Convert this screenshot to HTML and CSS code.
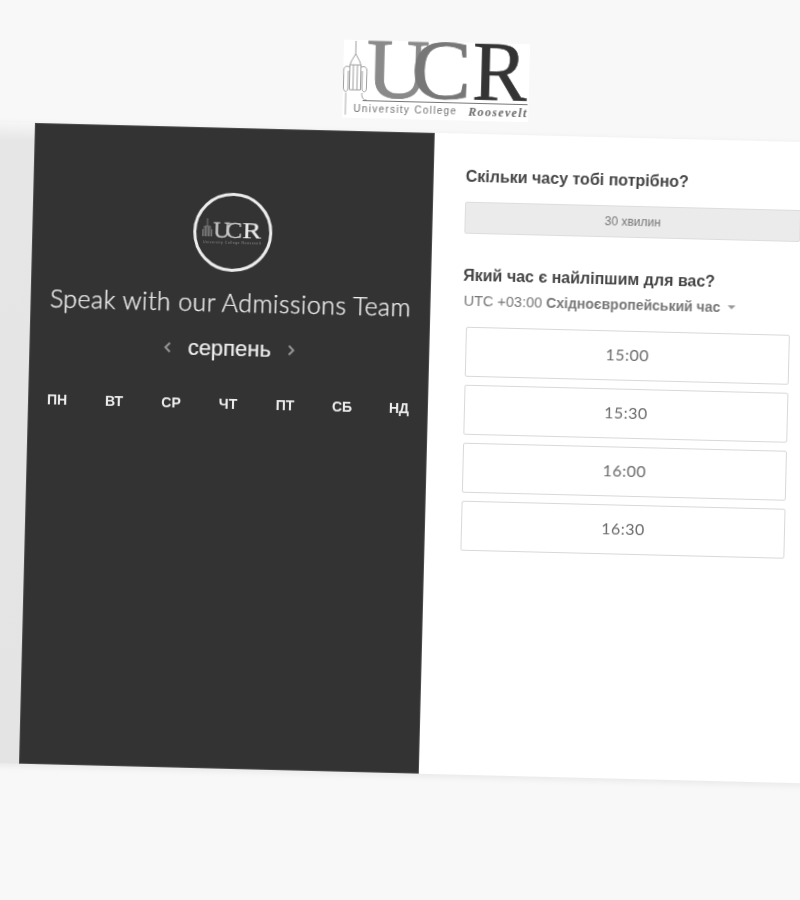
FILE: index.html
```html
<!DOCTYPE html>
<html lang="uk">
<head>
<meta charset="utf-8">
<title>Speak with our Admissions Team</title>
<link rel="stylesheet" href="styles.css">
</head>
<body>
<div class="page">
  <div class="stage">
    <header class="brand">
      <svg class="brand-logo" viewBox="0 0 186 78" width="186" height="78" role="img" aria-label="UCR University College Roosevelt">
        <rect width="186" height="78" fill="#fff"/>
        <g fill="none" stroke="#a0a0a0" stroke-width="1">
          <path d="M12 1V14M12 14L8 21L6.500 25V50M12 14L16 21L17.500 25V50M6.500 25H17.500M10 25V50M14 25V50"/>
          <path d="M6 27C0 25 0 30 0.500 36V48C0.500 53 5 53 5 48V31M18 27C24 25 24 30 23.500 36V48C23.500 53 19 53 19 48V31M6.500 50H17.500"/>
          <path d="M3 53V75" stroke="#aaa"/>
          <path d="M19 53C19 57 20 60 24 60"/>
        </g>
        <path d="M20 60.500H185" stroke="#777" stroke-width="1"/>
        <text class="logo-u" x="23" y="57" textLength="63" lengthAdjust="spacingAndGlyphs">U</text>
        <text class="logo-c" x="68" y="57" textLength="60" lengthAdjust="spacingAndGlyphs">C</text>
        <text class="logo-r" x="129" y="57" textLength="55" lengthAdjust="spacingAndGlyphs">R</text>
        <text class="logo-sub" x="11" y="72">University College</text>
        <text class="logo-sub-em" x="126" y="73" textLength="58">Roosevelt</text>
      </svg>
    </header>
    <main class="card-row">
      <div class="edge"></div>
      <section class="panel-dark">
        <div class="avatar">
          <svg class="avatar-logo" viewBox="0 0 62 29" width="62" height="29" role="img" aria-label="UCR">
            <g fill="none" stroke="#7c7c7c" stroke-width="1"><path d="M6 1V19M3 9H9M3 9V19M9 9V19M4.500 9V19M7.500 9V19M1.500 12V19M10.500 12V19"/></g>
            <text class="mini-uc" x="12" y="20" textLength="17" lengthAdjust="spacingAndGlyphs">U</text>
            <text class="mini-uc" x="24" y="20" textLength="17" lengthAdjust="spacingAndGlyphs">C</text>
            <text class="mini-r" x="41" y="20" textLength="19" lengthAdjust="spacingAndGlyphs">R</text>
            <text class="mini-sub" x="2" y="25.500" textLength="58">University College Roosevelt</text>
          </svg>
        </div>
        <h1 class="team-title">Speak with our Admissions Team</h1>
        <div class="month-nav">
          <svg class="chev" viewBox="0 0 8 12" width="8" height="12"><path d="M6.500 1.500L2 6L6.500 10.500" fill="none" stroke="#9a9a9a" stroke-width="1.800"/></svg>
          <span class="month">серпень</span>
          <svg class="chev" viewBox="0 0 8 12" width="8" height="12"><path d="M1.500 1.500L6 6L1.500 10.500" fill="none" stroke="#9a9a9a" stroke-width="1.800"/></svg>
        </div>
        <div class="weekdays">
          <span>ПН</span><span>ВТ</span><span>СР</span><span>ЧТ</span><span>ПТ</span><span>СБ</span><span>НД</span>
        </div>
      </section>
      <section class="panel-light">
        <h2 class="question">Скільки часу тобі потрібно?</h2>
        <div class="duration">30 хвилин</div>
        <h2 class="question question-time">Який час є найліпшим для вас?</h2>
        <div class="timezone">UTC +03:00 <b>Східноєвропейський час</b><i class="caret"></i></div>
        <div class="slots">
          <button class="slot">15:00</button>
          <button class="slot">15:30</button>
          <button class="slot">16:00</button>
          <button class="slot">16:30</button>
        </div>
      </section>
    </main>
  </div>
</div>
</body>
</html>
```
FILE: styles.css
```css
* { box-sizing: border-box; }
html, body { margin: 0; padding: 0; height: 100%; }
body { background: #f8f8f8; font-family: "Liberation Sans", Arial, sans-serif; overflow: hidden; }
.page { width: 800px; height: 900px; overflow: hidden; }
.stage {
  width: 876px;
  padding-top: 31px;
  transform-origin: 0 0;
  transform: rotate(1.43deg);
  filter: blur(0.4px);
}
.brand { display: flex; justify-content: center; height: 91px; }
.brand-logo { display: block; overflow: visible; }
.logo-u { font: 85px "Liberation Serif", serif; fill: #8a8a8a; stroke: #8a8a8a; stroke-width: 0.8px; }
.logo-c { font: 85px "Liberation Serif", serif; fill: #777; stroke: #777; stroke-width: 0.8px; }
.logo-r { font: 85px "Liberation Serif", serif; fill: #343434; stroke: #343434; stroke-width: 0.5px; }
.logo-sub { font: 10px "Liberation Sans", sans-serif; letter-spacing: 1.3px; fill: #707070; }
.logo-sub-em { font: italic bold 12px "Liberation Serif", serif; fill: #666; }

.card-row { display: flex; height: 641px; box-shadow: 0 2px 7px rgba(0, 0, 0, 0.07); }
.edge { width: 38px; flex: none; background: linear-gradient(180deg, #f6f6f6, #e6e6e6 18px, #e4e4e4); }
.panel-dark {
  width: 400px; flex: none; background: #333; color: #f2f2f2; border: 1px solid #4c4c4c;
  display: flex; flex-direction: column; align-items: center;
  padding-top: 64px;
}
.avatar {
  width: 79px; height: 79px; border-radius: 50%; border: 3px solid #ececec;
  display: flex; align-items: center; justify-content: center;
}
.avatar-logo { overflow: visible; }
.mini-uc { font: 24px "Liberation Serif", serif; fill: #c8c8c8; stroke: #c8c8c8; stroke-width: 0.3px; }
.mini-r { font: 24px "Liberation Serif", serif; fill: #ececec; stroke: #ececec; stroke-width: 0.2px; }
.mini-sub { font: 3.500px "Liberation Sans", sans-serif; fill: #8c8c8c; }
.team-title {
  margin: 13px 0 0; font: 300 25px/34px Lato, sans-serif; color: #f4f4f4; letter-spacing: 0.4px; white-space: nowrap; -webkit-text-stroke: 0.25px #f4f4f4;
}
.month-nav { display: flex; align-items: center; margin-top: 14px; gap: 16px; height: 32px; }
.month { font-size: 22px; color: #f0f0f0; -webkit-text-stroke: 0.2px #f0f0f0; }
.chev { display: block; }
.weekdays {
  display: grid; grid-template-columns: repeat(7, 57px); justify-items: center;
  margin-top: 31px; font-size: 14px; font-weight: 700; color: #eee;
}
.panel-light { flex: none; width: 400px; background: #fff; padding: 32px 0 0 32px; color: #3c3c3c; }
.question { margin: 0; font-size: 16px; line-height: 22px; font-weight: 700; color: #444; }
.duration {
  width: 336px; height: 32px; margin-top: 14px;
  background: #ebebeb; border: 1px solid #ddd; border-radius: 2px;
  display: flex; align-items: center; justify-content: center;
  font-size: 12px; color: #777;
}
.question-time { margin-top: 31px; }
.timezone { margin-top: 6px; margin-left: 1px; font-size: 14.500px; color: #777; white-space: nowrap; display: flex; align-items: center; gap: 4px; }
.timezone b { font-weight: 700; font-size: 14px; }
.caret { width: 0; height: 0; border: 4px solid transparent; border-top-color: #999; border-bottom: 0; margin-left: 3px; }
.slots { display: flex; flex-direction: column; gap: 8px; margin-top: 18px; margin-left: 4px; }
.slot {
  width: 324px; height: 50px; padding: 0 0 3px 0; background: #fff; border: 1px solid #d8d8d8; border-radius: 2px;
  font: 16px Lato, sans-serif; letter-spacing: 0.5px; color: #6a6a6a;
}
```
